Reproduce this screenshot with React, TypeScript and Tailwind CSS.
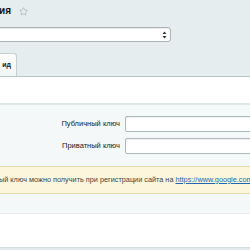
import { Star } from 'lucide-react'

// Fragment of a Bitrix-like admin settings page (cropped at the left edge)
function SelectBox() {
  return (
    <div className="-ml-[6px] mt-[9px] flex h-[15px] w-[177px] items-center justify-end rounded-[3px] border border-[#a9b4b7] bg-white pr-[3px] shadow-[inset_0_1px_1px_rgba(0,0,0,0.08)]">
      <svg width="5" height="8" viewBox="0 0 5 8">
        <path d="M2.5 0.5 L4.5 3 H0.5 Z" fill="#333" />
        <path d="M2.5 7.5 L4.5 5 H0.5 Z" fill="#333" />
      </svg>
    </div>
  )
}

function Field({ label }: { label: string }) {
  return (
    <div className="flex items-center">
      <div className="w-[120px] shrink-0 text-right text-[7.5px] text-[#222]">{label}</div>
      <div className="ml-[5px] h-[16px] w-[160px] shrink-0 rounded-[2px] border border-[#aeb9bc] bg-white shadow-[inset_0_1px_1px_rgba(0,0,0,0.06)]" />
    </div>
  )
}

export default function App() {
  return (
    <div
      className="h-[250px] w-[250px] overflow-hidden bg-[#e6edef]"
      style={{ fontFamily: '"Liberation Sans", Arial, sans-serif' }}
    >
      <div className="flex items-center pt-[4px]">
        <span className="-ml-[1px] text-[10px] font-bold leading-[14px] text-[#111]">ия</span>
        <Star className="ml-[8px] h-[9px] w-[9px] text-[#9aa5a8]" strokeWidth={1.6} />
      </div>

      <SelectBox />

      <div className="mt-[11px] flex">
        <div className="-ml-[4px] flex h-[23px] w-[21px] items-center justify-end rounded-tr-[3px] border border-b-0 border-[#c6d0d2] bg-gradient-to-b from-white to-[#f1f5f6] pr-[5px] text-[7px] font-bold text-[#222]">
          ид
        </div>
      </div>

      <div className="h-[27px] border-t border-[#b9c4c7] bg-white" />

      <div className="overflow-hidden border-t-2 border-[#dfe6e8] bg-[#f5f8f9] pb-[19px] pt-[11px]">
        <div className="flex flex-col gap-[6px]">
          <Field label="Публичный ключ" />
          <Field label="Приватный ключ" />
        </div>
        <div className="mt-[12px] flex h-[28px] items-center whitespace-nowrap border-y border-[#e3d9ad] bg-[#fbf6dc] text-[7.3px] text-[#444]">
          <span className="-ml-[1px]">
            ый ключ можно получить при регистрации сайта на{' '}
            <span className="text-[#2067b0] underline">https://www.google.com/recaptcha/admin</span>
          </span>
        </div>
      </div>

      <div className="h-[34px] border-t border-[#e9eef0] bg-white" />
      <div className="h-[4px] border-t border-[#d3dcdf] bg-[#e3eaec]" />
    </div>
  )
}
